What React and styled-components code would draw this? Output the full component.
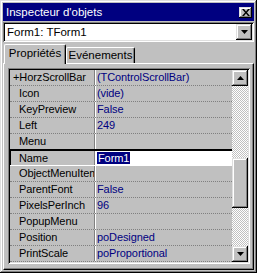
import React from 'react';
import styled, { createGlobalStyle } from 'styled-components';

const GlobalStyle = createGlobalStyle`
  html, body {
    margin: 0;
    padding: 0;
    background: #c0c0c0;
  }
  * {
    box-sizing: border-box;
  }
`;

const raised = `
  box-shadow: inset -1px -1px #000, inset 1px 1px #dfdfdf, inset -2px -2px #808080, inset 2px 2px #fff;
`;

const sunken = `
  box-shadow: inset 1px 1px #808080, inset -1px -1px #fff, inset 2px 2px #000, inset -2px -2px #dfdfdf;
`;

const Window = styled.div`
  width: 257px;
  height: 273px;
  background: #c0c0c0;
  ${raised}
  padding: 3px 3px 3px 3px;
  display: flex;
  flex-direction: column;
  font-family: "Liberation Sans", Arial, sans-serif;
  font-size: 11px;
  color: #000;
`;

const TitleBar = styled.div`
  height: 18px;
  background: #000080;
  color: #fff;
  display: flex;
  align-items: center;
  justify-content: space-between;
  padding: 0 2px 0 3px;
  font-size: 11.5px;
`;

const SmallButton = styled.div`
  width: ${(p) => p.$w}px;
  height: ${(p) => p.$h}px;
  background: #c0c0c0;
  ${raised}
  display: flex;
  align-items: center;
  justify-content: center;
  flex-shrink: 0;
`;

const Combo = styled.div`
  margin-top: 1px;
  height: 20px;
  background: #fff;
  ${sunken}
  display: flex;
  align-items: center;
  padding: 2px;
  font-size: 11.5px;
`;

const ComboText = styled.div`
  flex: 1;
  padding-left: 2px;
`;

const TabsRow = styled.div`
  display: flex;
  align-items: flex-end;
  margin-top: 2px;
  padding-left: 1px;
  height: 19px;
  position: relative;
  z-index: 1;
`;

const Tab = styled.div`
  width: ${(p) => p.$w}px;
  height: ${(p) => (p.$active ? 20 : 16)}px;
  margin-bottom: ${(p) => (p.$active ? -1 : 0)}px;
  background: #c0c0c0;
  border-top: 1px solid #fff;
  border-left: 1px solid #fff;
  border-right: 1px solid #000;
  border-radius: 2px 2px 0 0;
  box-shadow: inset -1px 0 #808080;
  display: flex;
  justify-content: center;
  padding-top: ${(p) => (p.$active ? 2 : 1)}px;
  font-size: 11.5px;
`;

const Panel = styled.div`
  flex: 1;
  background: #c0c0c0;
  border-top: 1px solid #fff;
  border-left: 1px solid #fff;
  border-right: 1px solid #000;
  border-bottom: 1px solid #000;
  box-shadow: inset -1px -1px #808080;
  padding: 4px 3px 2px 4px;
`;

const Grid = styled.div`
  width: 242px;
  height: 196px;
  ${sunken}
  padding: 2px;
  display: flex;
`;

const Rows = styled.div`
  flex: 1;
  display: flex;
  flex-direction: column;
`;

const Row = styled.div`
  height: 16px;
  display: flex;
  border-bottom: 1px dotted #808080;
  font-size: 11px;
  letter-spacing: -0.1px;
  line-height: 15px;
  ${(p) =>
    p.$selected &&
    `
    border-bottom: 1px solid #fff;
    margin-top: -1px;
    height: 17px;
    border-top: 2px solid #000;
    box-shadow: inset 1px 0 #000;
  `}
`;

const NameCell = styled.div`
  width: 85px;
  flex-shrink: 0;
  border-right: 1px solid #808080;
  padding-left: ${(p) => (p.$expand ? 3 : 9)}px;
  white-space: nowrap;
  overflow: hidden;
`;

const ValueCell = styled.div`
  flex: 1;
  border-left: 1px solid #fff;
  padding-left: 1px;
  color: #000080;
  white-space: nowrap;
  overflow: hidden;
  background: ${(p) => (p.$edit ? '#fff' : 'transparent')};
`;

const Selection = styled.span`
  background: #000080;
  color: #fff;
  padding: 0 1px;
`;

const ScrollBar = styled.div`
  width: 16px;
  display: flex;
  flex-direction: column;
  background-color: #c0c0c0;
  background-image: conic-gradient(#fff 25%, #c0c0c0 0 50%, #fff 0 75%, #c0c0c0 0);
  background-size: 2px 2px;
`;

const Thumb = styled.div`
  height: 50px;
  margin-top: 72px;
  background: #c0c0c0;
  ${raised}
`;

const Track = styled.div`
  flex: 1;
`;

const Arrow = ({ down }) => (
  <svg width="7" height="4" viewBox="0 0 7 4">
    <polygon points={down ? '0,0 7,0 3.5,4' : '3.5,0 7,4 0,4'} fill="#000" />
  </svg>
);

const CloseGlyph = () => (
  <svg width="8" height="7" viewBox="0 0 8 7">
    <path d="M0 0h2l2 2.5L6 0h2L5 3.5 8 7H6L4 4.5 2 7H0l3-3.5z" fill="#000" />
  </svg>
);

const props = [
  { name: 'HorzScrollBar', value: '(TControlScrollBar)', expand: true },
  { name: 'Icon', value: '(vide)' },
  { name: 'KeyPreview', value: 'False' },
  { name: 'Left', value: '249' },
  { name: 'Menu', value: '' },
  { name: 'Name', value: 'Form1', selected: true },
  { name: 'ObjectMenuItem', value: '' },
  { name: 'ParentFont', value: 'False' },
  { name: 'PixelsPerInch', value: '96' },
  { name: 'PopupMenu', value: '' },
  { name: 'Position', value: 'poDesigned' },
  { name: 'PrintScale', value: 'poProportional' },
];

export default function App() {
  return (
    <>
      <GlobalStyle />
      <Window>
        <TitleBar>
          <span>Inspecteur d'objets</span>
          <SmallButton $w={13} $h={11}>
            <CloseGlyph />
          </SmallButton>
        </TitleBar>
        <Combo>
          <ComboText>Form1: TForm1</ComboText>
          <SmallButton $w={16} $h={16}>
            <Arrow down />
          </SmallButton>
        </Combo>
        <TabsRow>
          <Tab $active $w={62}>Propriétés</Tab>
          <Tab $w={69}>Evénements</Tab>
        </TabsRow>
        <Panel>
          <Grid>
            <Rows>
              {props.map((p) => (
                <Row key={p.name} $selected={p.selected}>
                  <NameCell $expand={p.expand}>
                    {p.expand ? '+' : ''}
                    {p.name}
                  </NameCell>
                  <ValueCell $edit={p.selected}>
                    {p.selected ? <Selection>{p.value}</Selection> : p.value}
                  </ValueCell>
                </Row>
              ))}
            </Rows>
            <ScrollBar>
              <SmallButton $w={16} $h={16}>
                <Arrow />
              </SmallButton>
              <Thumb />
              <Track />
              <SmallButton $w={16} $h={16}>
                <Arrow down />
              </SmallButton>
            </ScrollBar>
          </Grid>
        </Panel>
      </Window>
    </>
  );
}
